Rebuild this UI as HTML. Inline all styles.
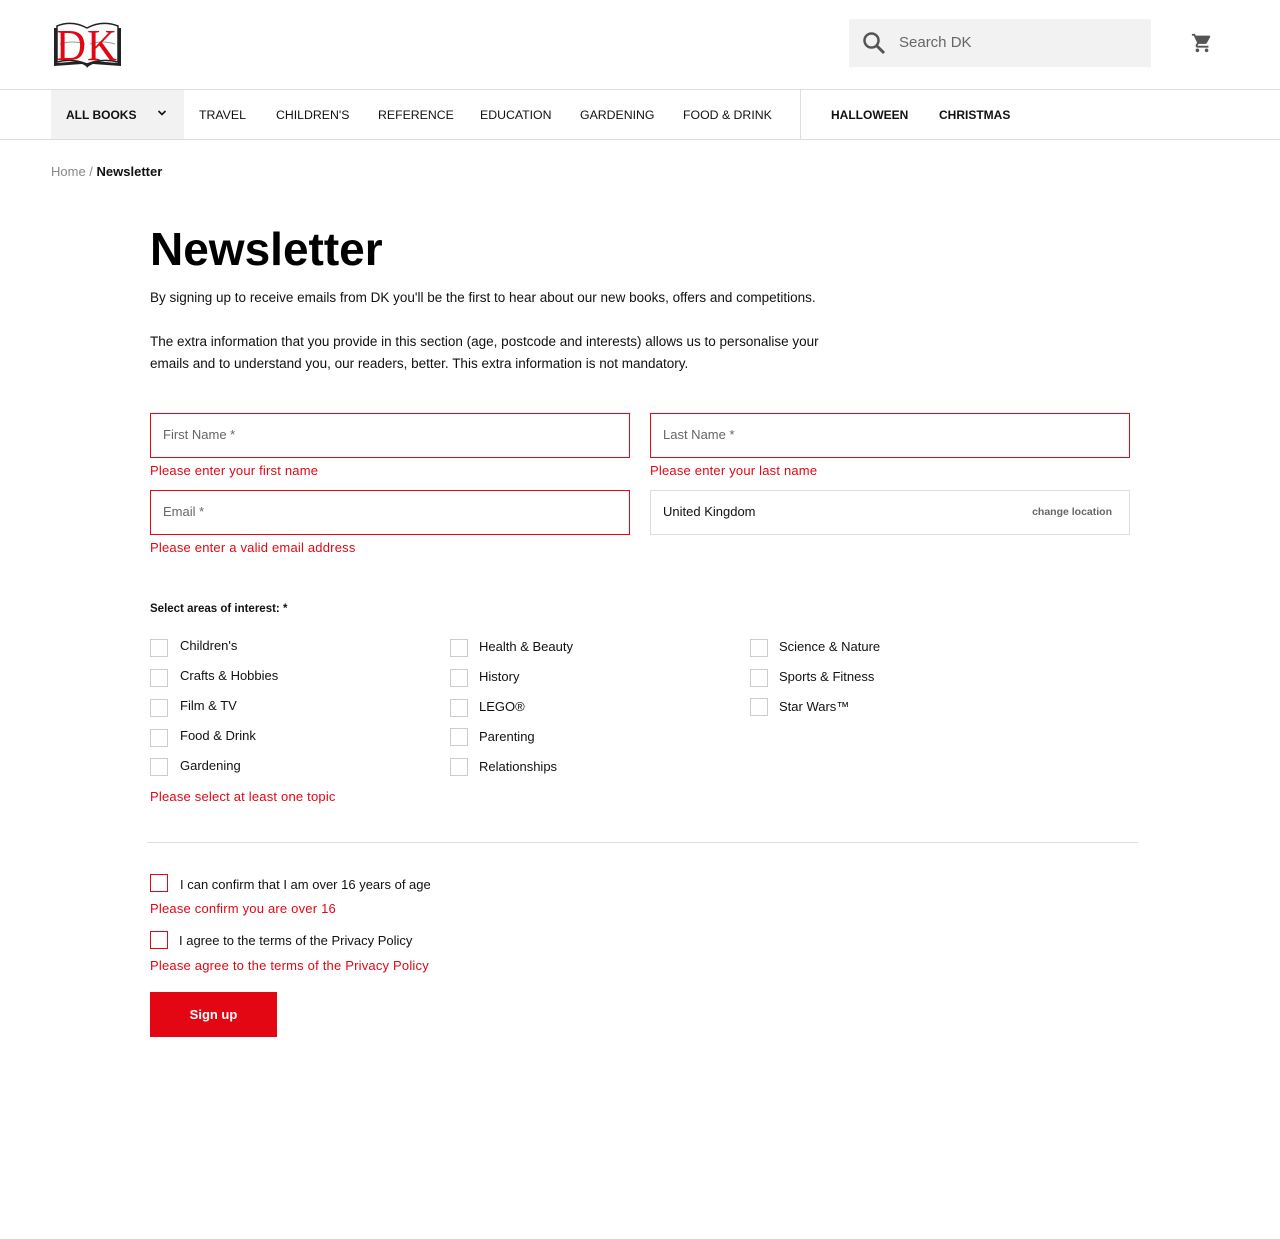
<!DOCTYPE html>
<html><head><meta charset="utf-8"><style>
*{margin:0;padding:0;box-sizing:border-box}
body{width:1280px;height:1239px;background:#fff;font-family:"Liberation Sans",sans-serif;color:#111;position:relative;overflow:hidden}
.a{position:absolute;white-space:nowrap}
.nav{font-size:12.3px;top:108px;color:#111}
.inp{position:absolute;height:45px;border:1px solid #e30613;font-size:13px;color:#666;padding:13px 12px}
.err{position:absolute;font-size:13px;color:#e30613;letter-spacing:0.2px}
.cb{position:absolute;width:18px;height:18px;border:1px solid #ccc}
.cl{position:absolute;font-size:13px;color:#111}
p.t{position:absolute;left:150px;font-size:13.5px;line-height:22px;color:#111}
</style></head><body>
<svg class="a" style="left:52px;top:20px" width="71" height="50" viewBox="0 0 71 50">
<path d="M2 8 L2 46 L30 44 Q35 46 35 48 Q36 46 41 44 L69 46 L69 8 L66 8 L66 43 L41 41 Q36 42 35 45 Q34 42 30 41 L5 43 L5 8Z" fill="#222"/>
<path d="M5 6 Q20 0 35 8 Q50 0 66 6 L66 42 Q50 38 35 44 Q20 38 5 42Z" fill="#fff" stroke="#222" stroke-width="1.5"/>
<path d="M8 24 Q20 20 33 24 M38 24 Q50 20 63 24" stroke="#999" fill="none"/>
<text x="4" y="40" font-family="Liberation Serif" font-size="44" fill="#e30613" textLength="30" lengthAdjust="spacingAndGlyphs">D</text>
<text x="35" y="40" font-family="Liberation Serif" font-size="44" fill="#e30613" textLength="30" lengthAdjust="spacingAndGlyphs">K</text>
</svg>
<div class="a" style="left:849px;top:19px;width:302px;height:48px;background:#f2f2f2"></div>
<svg class="a" style="left:862px;top:31px" width="24" height="24" viewBox="0 0 24 24"><circle cx="9.5" cy="9.5" r="7" stroke="#555" stroke-width="2.5" fill="none"/><path d="M14.5 14.5 L22 22" stroke="#555" stroke-width="3"/></svg>
<div class="a" style="left:899px;top:34px;font-size:15px;color:#666">Search DK</div>
<svg class="a" style="left:1191px;top:32px" width="22" height="22" viewBox="0 0 24 24"><path fill="#555" d="M7 18c-1.1 0-2 .9-2 2s.9 2 2 2 2-.9 2-2-.9-2-2-2zM1 2v2h2l3.6 7.590-1.350 2.450c-.16.28-.25.61-.25.96 0 1.1.9 2 2 2h12v-2H7.42c-.14 0-.25-.11-.25-.25l.03-.12.9-1.630h7.450c.75 0 1.410-.41 1.750-1.030l3.580-6.490A1 1 0 0 0 20 4H5.21l-.94-2H1zm16 16c-1.1 0-2 .9-2 2s.9 2 2 2 2-.9 2-2-.9-2-2-2z"/></svg>
<div class="a" style="left:0;top:89px;width:1280px;height:1px;background:#ddd"></div>
<div class="a" style="left:0;top:139px;width:1280px;height:1px;background:#ddd"></div>
<div class="a" style="left:51px;top:90px;width:133px;height:49px;background:#f2f2f2"></div>
<div class="a" style="left:800px;top:90px;width:1px;height:49px;background:#ddd"></div>
<div class="a nav" style="left:66px;font-weight:bold;font-size:12px">ALL BOOKS</div>
<svg class="a" style="left:157px;top:109px" width="10" height="8" viewBox="0 0 10 8"><path d="M1.5 2 L5 5.5 L8.5 2" stroke="#111" stroke-width="1.600" fill="none"/></svg>
<div class="a nav" style="left:199px">TRAVEL</div>
<div class="a nav" style="left:276px">CHILDREN'S</div>
<div class="a nav" style="left:378px">REFERENCE</div>
<div class="a nav" style="left:480px">EDUCATION</div>
<div class="a nav" style="left:580px">GARDENING</div>
<div class="a nav" style="left:683px">FOOD &amp; DRINK</div>
<div class="a nav" style="left:831px;font-weight:bold;font-size:12px">HALLOWEEN</div>
<div class="a nav" style="left:939px;font-weight:bold;font-size:12px">CHRISTMAS</div>
<div class="a" style="left:51px;top:164px;font-size:13px;color:#888">Home / <span style="color:#111;font-weight:bold">Newsletter</span></div>
<div class="a" style="left:150px;top:222px;font-size:46px;font-weight:bold;color:#000">Newsletter</div>
<p class="t" style="top:287px">By signing up to receive emails from DK you'll be the first to hear about our new books, offers and competitions.</p>
<p class="t" style="top:331px">The extra information that you provide in this section (age, postcode and interests) allows us to personalise your<br>emails and to understand you, our readers, better. This extra information is not mandatory.</p>
<div class="inp" style="left:150px;top:413px;width:480px">First Name *</div>
<div class="inp" style="left:650px;top:413px;width:480px">Last Name *</div>
<div class="err" style="left:150px;top:463px">Please enter your first name</div>
<div class="err" style="left:650px;top:463px">Please enter your last name</div>
<div class="inp" style="left:150px;top:490px;width:480px">Email *</div>
<div class="inp" style="left:650px;top:490px;width:480px;border-color:#ddd;color:#111">United Kingdom<span style="position:absolute;right:17px;top:15px;font-size:10.5px;color:#666;font-weight:bold">change location</span></div>
<div class="err" style="left:150px;top:540px">Please enter a valid email address</div>
<div class="a" style="left:150px;top:603px;font-size:11.5px;font-weight:bold">Select areas of interest: *</div>
<div class="cb" style="left:150px;top:639px"></div><div class="cl" style="left:180px;top:638px">Children's</div>
<div class="cb" style="left:150px;top:669px"></div><div class="cl" style="left:180px;top:668px">Crafts &amp; Hobbies</div>
<div class="cb" style="left:150px;top:699px"></div><div class="cl" style="left:180px;top:698px">Film &amp; TV</div>
<div class="cb" style="left:150px;top:729px"></div><div class="cl" style="left:180px;top:728px">Food &amp; Drink</div>
<div class="cb" style="left:150px;top:758px"></div><div class="cl" style="left:180px;top:758px">Gardening</div>
<div class="cb" style="left:450px;top:639px"></div><div class="cl" style="left:479px;top:639px">Health &amp; Beauty</div>
<div class="cb" style="left:450px;top:669px"></div><div class="cl" style="left:479px;top:669px">History</div>
<div class="cb" style="left:450px;top:699px"></div><div class="cl" style="left:479px;top:699px">LEGO®</div>
<div class="cb" style="left:450px;top:728px"></div><div class="cl" style="left:479px;top:729px">Parenting</div>
<div class="cb" style="left:450px;top:758px"></div><div class="cl" style="left:479px;top:759px">Relationships</div>
<div class="cb" style="left:750px;top:639px"></div><div class="cl" style="left:779px;top:639px">Science &amp; Nature</div>
<div class="cb" style="left:750px;top:669px"></div><div class="cl" style="left:779px;top:669px">Sports &amp; Fitness</div>
<div class="cb" style="left:750px;top:698px"></div><div class="cl" style="left:779px;top:699px">Star Wars™</div>
<div class="err" style="left:150px;top:789px">Please select at least one topic</div>
<div class="a" style="left:147px;top:842px;width:991px;height:1px;background:#ddd"></div>
<div class="cb" style="left:150px;top:874px;border-color:#e30613"></div><div class="cl" style="left:180px;top:877px">I can confirm that I am over 16 years of age</div>
<div class="err" style="left:150px;top:901px">Please confirm you are over 16</div>
<div class="cb" style="left:150px;top:931px;border-color:#e30613"></div><div class="cl" style="left:179px;top:933px">I agree to the terms of the Privacy Policy</div>
<div class="err" style="left:150px;top:958px">Please agree to the terms of the Privacy Policy</div>
<div class="a" style="left:150px;top:992px;width:127px;height:45px;background:#e30613;color:#fff;font-size:13px;font-weight:bold;text-align:center;line-height:45px">Sign up</div>
</body></html>
